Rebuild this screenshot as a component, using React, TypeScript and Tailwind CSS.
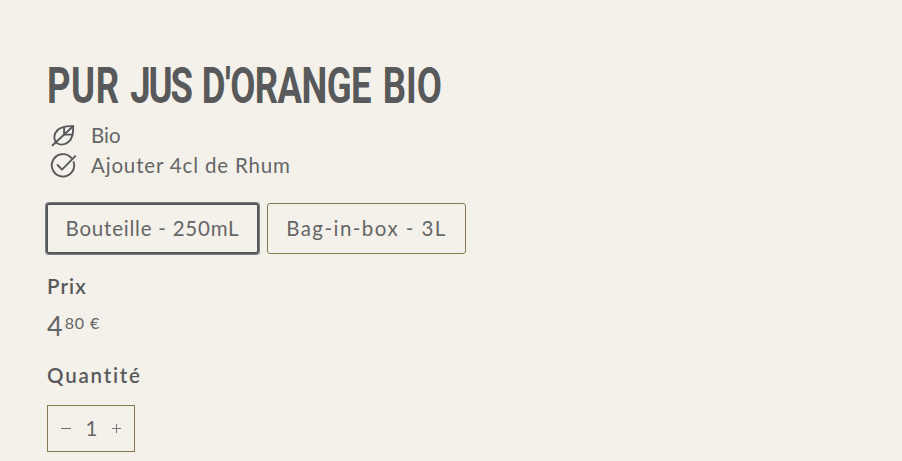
function LeafIcon() {
  return (
    <svg width="26" height="26" viewBox="0 0 26 26" fill="none" stroke="#56585a" strokeWidth="1.9" strokeLinecap="round" strokeLinejoin="round" className="block">
      <path d="M2.6 23.3 23.1 4.3" />
      <path d="M5.6 20C3.5 16.6 4 11.8 7.2 8.5c3.8-3.9 9.9-4.6 16-4.3.2 6.3-.5 12.1-4.5 15.6-3.6 3.2-8.5 3.4-12 1.2" />
      <path d="M14.1 5.3v7.3h8.4" />
    </svg>
  );
}

function CheckIcon() {
  return (
    <svg width="28" height="26" viewBox="0 0 28 26" fill="none" stroke="#56585a" strokeWidth="1.9" strokeLinecap="round" strokeLinejoin="round" className="block">
      <path d="M21.3 5.9A11.2 11.2 0 1 0 23.7 10.2" />
      <path d="m7.6 13 4.4 4.6L25.3 4.2" />
    </svg>
  );
}

export default function App() {
  return (
    <main className="h-[461px] w-[902px] overflow-hidden bg-[#f4f1ea] pl-[47px] pt-[59px] font-['Lato','Liberation_Sans',sans-serif] text-[20.5px] leading-[30px] text-[#58595b]">
      <h1 className="flex h-[61px] w-max origin-left scale-x-[0.73] whitespace-pre pt-px font-['Roboto','Liberation_Sans_Narrow',sans-serif] text-[50px] font-bold leading-[52px]">
        <span className="w-[114px] tracking-[0.8px]">PUR </span>
        <span className="w-[98px] tracking-[-2.8px]">JUS </span>
        <span className="w-[248px] tracking-[-0.8px]">D'ORANGE </span>
        <span>BIO</span>
      </h1>
      <ul className="text-[#656667]">
        <li className="flex h-[30px] items-center">
          <span className="w-[44px] pl-[3px]"><LeafIcon /></span>
          <span>Bio</span>
        </li>
        <li className="flex h-[30px] items-center">
          <span className="w-[44px] pl-[3px]"><CheckIcon /></span>
          <span className="tracking-[0.83px]">Ajouter 4cl de Rhum</span>
        </li>
      </ul>
      <div className="-ml-[1px] mt-[23px] flex h-[51px] items-center gap-[8px] text-[#656667]">
        <button className="h-[51px] w-[213px] shrink-0 rounded-[3px] border-2 border-[#56585a] pb-px tracking-[0.77px] shadow-[0_0_0_1px_#7c7f7f]">
          Bouteille - 250mL
        </button>
        <button className="h-[51px] w-[199px] shrink-0 rounded-[3px] border border-[#87794d] pb-px tracking-[1.45px]">
          Bag-in-box - 3L
        </button>
      </div>
      <h2 className="mt-[17px] h-[30px] font-semibold tracking-[1.1px]">Prix</h2>
      <div className="mt-[9px] flex h-[32px] items-start text-[#656667]">
        <span className="text-[27px] leading-[32px]">4</span>
        <span className="ml-[2px] text-[16px] leading-[25px] tracking-[0.9px]">80 €</span>
      </div>
      <h2 className="mt-[18px] h-[30px] font-semibold tracking-[1.8px]">Quantité</h2>
      <div className="mt-[15px] flex h-[47px] w-[88px] items-center justify-between border border-[#87794d] pl-[13px] pr-[13px]">
        <svg width="10" height="11" className="block" stroke="#6c6d6c" fill="none"><path d="M0 5.5h10" /></svg>
        <span className="pb-[2px] text-[#656667]">1</span>
        <svg width="9" height="11" className="block" stroke="#777876" fill="none"><path d="M0 5.5h9M4.5 1v9" /></svg>
      </div>
    </main>
  );
}
